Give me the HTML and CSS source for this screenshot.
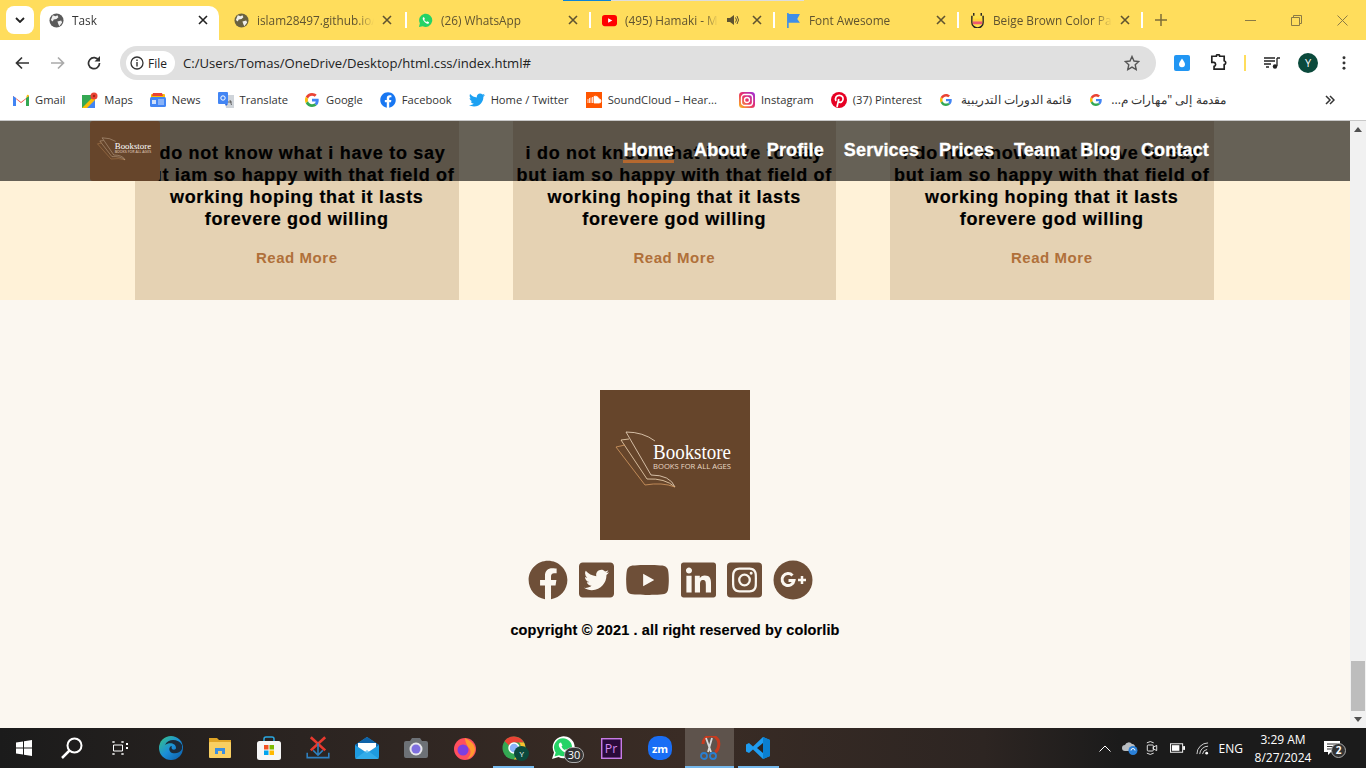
FILE: index.html
```html
<!DOCTYPE html>
<html lang="en">
<head>
    <meta charset="UTF-8">
    <title>Task</title>
    <link rel="stylesheet" href="styles.css">
</head>
<body>
    <svg class="sprite" aria-hidden="true">
        <symbol id="globe" viewBox="0 0 16 16">
            <circle cx="8" cy="8" r="7.5" fill="currentColor"/>
            <path d="M4 2.500l3 1 2-1 1 2-2 2-3 .5-1 2-2-1.500zM9 9l4-1 1 2-3 4-1-2z" fill="#fff" opacity=".9"/>
        </symbol>
        <symbol id="close" viewBox="0 0 10 10">
            <path d="M1 1l8 8M9 1l-8 8" stroke="currentColor" stroke-width="1.600" fill="none"/>
        </symbol>
        <symbol id="gicon" viewBox="0 0 48 48">
            <path fill="#EA4335" d="M24 9.500c3.540 0 6.710 1.220 9.210 3.600l6.850-6.850C35.900 2.380 30.470 0 24 0 14.620 0 6.510 5.380 2.560 13.220l7.980 6.190C12.430 13.720 17.740 9.500 24 9.500z"/>
            <path fill="#4285F4" d="M46.980 24.550c0-1.570-.15-3.090-.38-4.550H24v9.020h12.940c-.58 2.960-2.260 5.480-4.780 7.180l7.730 6c4.510-4.180 7.090-10.360 7.090-17.650z"/>
            <path fill="#FBBC05" d="M10.530 28.590c-.48-1.450-.76-2.990-.76-4.590s.27-3.140.76-4.590l-7.980-6.190C.92 16.460 0 20.120 0 24c0 3.880.92 7.540 2.560 10.780l7.970-6.190z"/>
            <path fill="#34A853" d="M24 48c6.480 0 11.930-2.130 15.890-5.810l-7.730-6c-2.150 1.450-4.920 2.300-8.160 2.300-6.260 0-11.570-4.220-13.470-9.910l-7.980 6.190C6.510 42.620 14.620 48 24 48z"/>
        </symbol>
        <symbol id="fb" viewBox="0 0 512 512">
            <path d="M504 256C504 119 393 8 256 8S8 119 8 256c0 123.780 90.690 226.380 209.250 245V327.690h-63V256h63v-54.640c0-62.150 37-96.480 93.670-96.480 27.140 0 55.520 4.840 55.520 4.840v61h-31.280c-30.800 0-40.410 19.120-40.410 38.730V256h68.780l-11 71.690h-57.780V501C413.310 482.380 504 379.780 504 256z"/>
        </symbol>
        <symbol id="booklogo" viewBox="0 0 150 150" preserveAspectRatio="none">
            <rect width="150" height="150" fill="#66452b"/>
            <g fill="none" stroke-width=".8">
                <path d="M26 42Q43 42 55 51M26 42L51 85Q70 85 75 97" stroke="#f0dcc4"/>
                <path d="M21 50L29 49M21 50L47 89Q65 88 75 97" stroke="#f3d9b8"/>
                <path d="M16 57L25 55M16 57L45 95Q62 92 75 97" stroke="#d59a62"/>
            </g>
            <text x="53" y="69" class="logo-name" textLength="78" lengthAdjust="spacingAndGlyphs">Bookstore</text>
            <text x="53" y="79" class="logo-tag" textLength="78" lengthAdjust="spacingAndGlyphs">BOOKS FOR ALL AGES</text>
        </symbol>
    </svg>

    <div class="load-bar"><span class="load-done"></span><span class="load-rest"></span></div>

    <header class="tabstrip">
        <div class="tab-search"><svg width="10" height="6" viewBox="0 0 10 6"><path d="M1 1l4 4 4-4" stroke="#222" stroke-width="1.800" fill="none"/></svg></div>
        <div class="tab tab-active">
            <svg class="fav fav-globe"><use href="#globe"/></svg>
            <span class="tab-title">Task</span>
            <svg class="tab-x"><use href="#close"/></svg>
        </div>
        <div class="tab tab-first">
            <svg class="fav fav-globe"><use href="#globe"/></svg>
            <span class="tab-title">islam28497.github.io/</span>
            <svg class="tab-x"><use href="#close"/></svg>
            <i class="tab-sep"></i>
        </div>
        <div class="tab">
            <svg class="fav" viewBox="0 0 16 16"><path d="M1 15l1-4A7 7 0 1 1 5 14z" fill="#25d366"/><path d="M5.500 4.500c-1 1-.5 3 1.500 5s3.800 2.300 4.500 1.300l.3-1-2-1-.8.800c-1-.4-2-1.400-2.400-2.400l.8-.8-1-2z" fill="#fff"/></svg>
            <span class="tab-title">(26) WhatsApp</span>
            <svg class="tab-x"><use href="#close"/></svg>
            <i class="tab-sep"></i>
        </div>
        <div class="tab">
            <svg class="fav" viewBox="0 0 16 12"><rect width="16" height="12" rx="3" fill="#f00"/><path d="M6.500 3.500v5L11 6z" fill="#fff"/></svg>
            <span class="tab-title tab-title-short">(495) Hamaki - Mawdoo</span>
            <svg class="tab-sound" viewBox="0 0 12 12"><path d="M0 4h3l4-3v10L3 8H0z" fill="#5f5330"/><path d="M8.500 3.500q2 2.500 0 5M10 2q3 4 0 8" stroke="#5f5330" fill="none"/></svg>
            <svg class="tab-x"><use href="#close"/></svg>
            <i class="tab-sep"></i>
        </div>
        <div class="tab">
            <svg class="fav" viewBox="0 0 14 14"><path d="M1 0v14h1.500V9H13l-2.500-3.500L13 1H2.500V0z" fill="#3f8ee8"/></svg>
            <span class="tab-title">Font Awesome</span>
            <svg class="tab-x"><use href="#close"/></svg>
            <i class="tab-sep"></i>
        </div>
        <div class="tab">
            <svg class="fav" viewBox="0 0 16 16"><path d="M2 3v7a6 6 0 0 0 12 0V3" fill="#ffe14a" stroke="#222" stroke-width="1.500"/><rect x="3" y="6" width="10" height="3" fill="#ffd23c"/><rect x="3" y="9" width="10" height="3" fill="#ef5a6f"/><path d="M4 0v3M12 0v3" stroke="#222" stroke-width="1.500"/></svg>
            <span class="tab-title">Beige Brown Color Palette</span>
            <svg class="tab-x"><use href="#close"/></svg>
            <i class="tab-sep"></i>
        </div>
        <svg class="tab-new" viewBox="0 0 12 12"><path d="M6 0v12M0 6h12" stroke="#7d6c38" stroke-width="1.500"/></svg>
        <div class="win-btns">
            <svg viewBox="0 0 11 11"><path d="M0 5.500h11" stroke="#8a7a45"/></svg>
            <svg viewBox="0 0 11 11"><path d="M.5 2.500h8v8h-8zM2.500 2.500v-2h8v8h-2" stroke="#8a7a45" fill="none"/></svg>
            <svg viewBox="0 0 11 11"><path d="M.5.500l10 10M10.500.500l-10 10" stroke="#8a7a45" fill="none"/></svg>
        </div>
    </header>

    <div class="toolbar">
        <svg class="tool" viewBox="0 0 14 14"><path d="M14 7H2M7 1.500L1.500 7 7 12.500" stroke="#333" stroke-width="1.700" fill="none"/></svg>
        <svg class="tool" viewBox="0 0 14 14"><path d="M0 7h12M7 1.500L12.500 7 7 12.500" stroke="#aaa" stroke-width="1.700" fill="none"/></svg>
        <svg class="tool" viewBox="0 0 14 14"><path d="M11.800 4.500A5.500 5.500 0 1 0 12.500 7" stroke="#333" stroke-width="1.700" fill="none"/><path d="M13 0v5.500H7.500z" fill="#333"/></svg>
        <div class="omnibox">
            <div class="site-chip">
                <svg width="14" height="14" viewBox="0 0 14 14"><circle cx="7" cy="7" r="6" stroke="#333" stroke-width="1.300" fill="none"/><path d="M7 6v4.500M7 3.500v1.500" stroke="#333" stroke-width="1.400"/></svg>
                <span>File</span>
            </div>
            <span class="url">C:/Users/Tomas/OneDrive/Desktop/html.css/index.html#</span>
            <svg class="star" viewBox="0 0 16 16"><path d="M8 1.500l2 4.500 4.800.5-3.600 3.200 1 4.800L8 12.100l-4.200 2.400 1-4.800L1.200 6.500 6 6z" stroke="#555" stroke-width="1.400" fill="none"/></svg>
        </div>
        <div class="tool-right">
            <svg class="ext-drop" viewBox="0 0 16 16"><rect width="16" height="16" rx="2" fill="#2196f3"/><path d="M8 3.500c2 3 3 4.300 3 5.800a3 3 0 0 1-6 0c0-1.500 1-2.800 3-5.800z" fill="#fff"/></svg>
            <svg class="ext-puzzle" viewBox="0 0 16 16"><path d="M1.500 2.500h4a1.500 1.500 0 0 1 3 0h4v4a1.800 1.800 0 0 1 0 3.500v4h-9v-2.500a1.800 1.800 0 0 0 0-3.500H1.500z" transform="translate(1 -.5)" stroke="#222" stroke-width="1.500" fill="none"/></svg>
            <i class="tool-div"></i>
            <svg class="ext-media" viewBox="0 0 16 12"><path d="M0 1h11M0 4h11M0 7h7M2 10h3" stroke="#222" stroke-width="1.300"/><path d="M13 1v8" stroke="#222" stroke-width="1.300"/><path d="M13 1h3" stroke="#222" stroke-width="1.500"/><circle cx="11" cy="9.500" r="2.200" fill="#222"/></svg>
            <span class="avatar">Y</span>
            <svg class="kebab" viewBox="0 0 4 16"><circle cx="2" cy="2" r="1.700"/><circle cx="2" cy="8" r="1.700"/><circle cx="2" cy="14" r="1.700"/></svg>
        </div>
    </div>

    <nav class="bookmarks">
        <a class="bm"><svg viewBox="0 0 16 12"><path d="M0 2l8 6 8-6v10h-3V5L8 9 3 5v7H0z" fill="#ea4335"/><path d="M0 2v10h3V4z" fill="#4285f4"/><path d="M16 2v10h-3V4z" fill="#34a853"/><path d="M13 4l3-2a1.500 1.500 0 0 0-2-1z" fill="#fbbc05"/></svg>Gmail</a>
        <a class="bm"><svg viewBox="0 0 16 16"><rect y="3" width="13" height="13" fill="#34a853"/><path d="M0 16L13 3v13z" fill="#fbbc05"/><path d="M5 16l8-8v8z" fill="#4285f4"/><circle cx="12" cy="4" r="3.500" fill="#ea4335"/><circle cx="12" cy="4" r="1.200" fill="#a52714"/></svg>Maps</a>
        <a class="bm"><svg viewBox="0 0 16 16"><rect x="1" y="2" width="14" height="4" rx="1" fill="#fbbc05"/><path d="M3 1h9l1 3H2z" fill="#ea4335"/><rect y="5" width="16" height="10" rx="1.500" fill="#4285f4"/><rect x="2" y="8" width="4" height="4" fill="#cfe0fb"/><path d="M8 8h6M8 10h6M8 12h6" stroke="#cfe0fb"/></svg>News</a>
        <a class="bm"><svg viewBox="0 0 16 16"><path d="M6 3h10v13H8z" fill="#cfd4da"/><rect width="10" height="12" rx="1" fill="#4285f4"/><path d="M8 14l2-2H7z" fill="#3367d6"/><circle cx="5" cy="6" r="2.200" stroke="#fff" fill="none"/><path d="M12 8l1.500 5M10 10h4" stroke="#666"/></svg>Translate</a>
        <a class="bm"><svg class="bm-google"><use href="#gicon"/></svg>Google</a>
        <a class="bm"><svg class="bm-fb"><use href="#fb"/></svg>Facebook</a>
        <a class="bm"><svg viewBox="0 0 512 512"><path fill="#1da1f2" d="M459 152c.3 4.500.3 9.100.3 13.600 0 138.700-105.600 298.600-298.600 298.600-59.500 0-114.700-17.200-161.100-47.100 8.400 1 16.600 1.300 25.300 1.300 49.100 0 94.200-16.600 130.300-44.800-46.100-1-84.800-31.200-98.100-72.800 6.500 1 13 1.600 19.800 1.600 9.400 0 18.800-1.300 27.600-3.600-48.100-9.700-84.100-52-84.100-103v-1.300c14 7.800 30.200 12.700 47.400 13.300-28.300-18.800-46.800-51-46.800-87.400 0-19.500 5.200-37.400 14.300-53 51.700 63.700 129.300 105.300 216.400 109.800-1.600-7.800-2.600-15.900-2.600-24 0-57.800 46.800-104.900 104.900-104.900 30.200 0 57.500 12.700 76.700 33.100 23.700-4.500 46.500-13.300 66.600-25.300-7.800 24.400-24.400 44.800-46.100 57.800 21.100-2.300 41.600-8.100 60.400-16.200-14.300 20.800-32.200 39.300-52.600 54.300z"/></svg>Home / Twitter</a>
        <a class="bm bm-wide"><svg viewBox="0 0 16 16"><rect width="16" height="16" fill="#f50"/><path d="M2 7v4M3.500 6v5M5 5.500V11M6.500 5v6M8 4.500V11h5a2 2 0 0 0 0-4c-.5-2-3-3.500-5-2.500z" stroke="#fff" fill="#fff" stroke-width=".8"/></svg>SoundCloud – Hear...</a>
        <a class="bm"><svg viewBox="0 0 16 16"><defs><linearGradient id="ig" x1="0" y1="1" x2="1" y2="0"><stop offset="0" stop-color="#fdc01c"/><stop offset=".5" stop-color="#e8306a"/><stop offset="1" stop-color="#9a2fe0"/></linearGradient></defs><rect width="16" height="16" rx="3.500" fill="url(#ig)"/><rect x="2.500" y="2.500" width="11" height="11" rx="3" stroke="#fff" stroke-width="1.300" fill="none"/><circle cx="8" cy="8" r="2.500" stroke="#fff" stroke-width="1.300" fill="none"/></svg>Instagram</a>
        <a class="bm"><svg viewBox="0 0 16 16"><circle cx="8" cy="8" r="8" fill="#e60023"/><path d="M6 15l1.800-8M5 9C3.500 6 5.500 3.300 8.300 3.300c2.700 0 4.200 2 3.700 4.400-.5 2.300-2.700 3.500-4.500 2" stroke="#fff" stroke-width="1.700" fill="none"/></svg>(37) Pinterest</a>
        <a class="bm bm-ar"><svg class="bm-g"><use href="#gicon"/></svg><span dir="rtl">قائمة الدورات التدريبية</span></a>
        <a class="bm bm-ar"><svg class="bm-g"><use href="#gicon"/></svg><span dir="rtl">مقدمة إلى "مهارات م...</span></a>
        <svg class="bm-more" viewBox="0 0 10 10"><path d="M1 1l4 4-4 4M5 1l4 4-4 4" stroke="#333" stroke-width="1.500" fill="none"/></svg>
    </nav>

    <div class="viewport">
        <main class="page">
            <div class="site-nav">
                <svg class="site-logo"><use href="#booklogo"/></svg>
                <ul class="site-links">
                    <li class="current">Home</li>
                    <li>About</li>
                    <li>Profile</li>
                    <li>Services</li>
                    <li>Prices</li>
                    <li>Team</li>
                    <li>Blog</li>
                    <li>Contact</li>
                </ul>
            </div>

            <section class="cards">
                <article class="card">
                    <p>i do not know what i have to say<br>but iam so happy with that field of<br>working hoping that it lasts<br>forevere god willing</p>
                    <a class="more">Read More</a>
                </article>
                <article class="card">
                    <p>i do not know what i have to say<br>but iam so happy with that field of<br>working hoping that it lasts<br>forevere god willing</p>
                    <a class="more">Read More</a>
                </article>
                <article class="card">
                    <p>i do not know what i have to say<br>but iam so happy with that field of<br>working hoping that it lasts<br>forevere god willing</p>
                    <a class="more">Read More</a>
                </article>
            </section>

            <footer class="footer">
                <svg class="footer-logo"><use href="#booklogo"/></svg>
                <div class="social">
                    <svg class="s-round" viewBox="0 0 512 512"><use href="#fb"/></svg>
                    <svg class="s-square" viewBox="0 0 448 512"><path d="M400 32H48C21.500 32 0 53.500 0 80v352c0 26.500 21.500 48 48 48h352c26.500 0 48-21.500 48-48V80c0-26.500-21.500-48-48-48zm-48.900 158.800c.2 2.800.2 5.700.2 8.500 0 86.700-66 186.600-186.600 186.600-37.200 0-71.700-10.800-100.700-29.400 5.300.6 10.400.8 15.800.8 30.700 0 58.900-10.400 81.400-28-28.800-.6-53-19.500-61.300-45.500 10.100 1.500 19.200 1.500 29.600-1.200-30-6.100-52.500-32.500-52.500-64.400v-.8c8.700 4.900 18.900 7.900 29.600 8.300a65.447 65.447 0 0 1-29.200-54.600c0-12.200 3.200-23.400 8.900-33.100 32.300 39.800 80.800 65.800 135.200 68.600-9.300-44.500 24-80.600 64-80.600 18.900 0 35.900 7.900 47.900 20.700 14.800-2.800 29-8.300 41.600-15.800-4.900 15.200-15.100 28-28.600 36 13.100-1.400 25.800-5.100 37.600-10.200-8.900 13.100-20.100 24.700-32.900 34z"/></svg>
                    <svg class="s-wide" viewBox="0 0 576 512"><path d="M549.655 124.083c-6.281-23.650-24.787-42.276-48.284-48.597C458.781 64 288 64 288 64S117.220 64 74.629 75.486c-23.497 6.322-42.003 24.947-48.284 48.597-11.412 42.867-11.412 132.305-11.412 132.305s0 89.438 11.412 132.305c6.281 23.650 24.787 41.500 48.284 47.821C117.220 448 288 448 288 448s170.780 0 213.371-11.486c23.497-6.321 42.003-24.171 48.284-47.821 11.412-42.867 11.412-132.305 11.412-132.305s0-89.438-11.412-132.305zm-317.510 213.508V175.185l142.739 81.205-142.739 81.201z"/></svg>
                    <svg class="s-square" viewBox="0 0 448 512"><path d="M416 32H31.900C14.300 32 0 46.500 0 64.300v383.400C0 465.500 14.300 480 31.900 480H416c17.600 0 32-14.500 32-32.300V64.300c0-17.800-14.400-32.300-32-32.300zM135.400 416H69V202.200h66.500V416zm-33.200-243c-21.300 0-38.500-17.300-38.500-38.500S80.900 96 102.200 96c21.200 0 38.500 17.300 38.500 38.500 0 21.300-17.200 38.500-38.500 38.500zm282.100 243h-66.400V312c0-24.800-.5-56.700-34.500-56.700-34.600 0-39.900 27-39.900 54.900V416h-66.400V202.200h63.700v29.200h.9c8.900-16.800 30.600-34.500 62.900-34.500 67.200 0 79.700 44.300 79.700 101.900V416z"/></svg>
                    <svg class="s-square" viewBox="0 0 448 512"><path d="M224 202.660A53.340 53.340 0 1 0 277.360 256 53.380 53.380 0 0 0 224 202.660zm124.710-41a54 54 0 0 0-30.410-30.410c-21-8.290-71-6.430-94.300-6.430s-73.250-1.930-94.310 6.430a54 54 0 0 0-30.410 30.410c-8.280 21-6.430 71.050-6.430 94.330S91 329.260 99.320 350.330a54 54 0 0 0 30.410 30.410c21 8.290 71 6.430 94.310 6.430s73.240 1.930 94.300-6.430a54 54 0 0 0 30.410-30.410c8.350-21 6.430-71.050 6.430-94.330s1.920-73.260-6.430-94.330zM224 338a82 82 0 1 1 82-82 81.900 81.900 0 0 1-82 82zm85.380-148.300a19.140 19.140 0 1 1 19.130-19.140 19.100 19.100 0 0 1-19.090 19.140zM400 32H48A48 48 0 0 0 0 80v352a48 48 0 0 0 48 48h352a48 48 0 0 0 48-48V80a48 48 0 0 0-48-48zm-17.120 290c-1.290 25.630-7.140 48.340-25.850 67s-41.400 24.630-67 25.850c-26.410 1.490-105.590 1.490-132 0-25.630-1.290-48.260-7.150-67-25.850s-24.630-41.420-25.850-67c-1.490-26.420-1.490-105.610 0-132 1.290-25.630 7.070-48.340 25.850-67s41.470-24.560 67-25.780c26.410-1.490 105.590-1.490 132 0 25.630 1.290 48.330 7.150 67 25.850s24.630 41.420 25.850 67.050c1.490 26.320 1.490 105.440 0 131.880z"/></svg>
                    <svg class="s-round" viewBox="0 0 40 40"><circle cx="20" cy="20" r="19.500"/><path d="M19.500 15.500a6 6 0 1 0 1.500 5h-5.500" class="gplus"/><path d="M25 20h8M29 16v8" class="gplus-add"/></svg>
                </div>
                <p class="copyright">copyright © 2021 . all right reserved by colorlib</p>
            </footer>
        </main>
        <aside class="scrollbar">
            <svg viewBox="0 0 8 5"><path d="M4 0l4 5H0z"/></svg>
            <div class="scroll-track"><div class="scroll-thumb"></div></div>
            <svg viewBox="0 0 8 5"><path d="M0 0h8L4 5z"/></svg>
        </aside>
    </div>

    <footer class="taskbar">
        <div class="task-start">
            <svg class="t-win" viewBox="0 0 16 16"><path d="M0 2.500l7-1v6H0zM8 1.300l8-1.300v7.500H8zM0 8.500h7v6l-7-1zM8 8.500h8V16l-8-1.300z" fill="#fff"/></svg>
            <svg class="t-search" viewBox="0 0 22 22"><circle cx="13.500" cy="8.500" r="7" stroke="#fff" stroke-width="2" fill="none"/><path d="M8.500 13.500L1 21" stroke="#fff" stroke-width="2.500"/></svg>
            <svg class="t-view" viewBox="0 0 16 16"><path d="M1.500 5h9v6h-9zM1 2h2M9 2h2M1 14h2M9 14h2M1 1v2M11 1v2M1 13v2M11 13v2" stroke="#fff" fill="none"/><path d="M14 3h2v2h-2zM14 7h2v2h-2z" fill="#fff"/></svg>
        </div>
        <div class="task-apps">
            <span class="app"><svg viewBox="0 0 24 24"><defs><linearGradient id="edge" x1="0" y1="0" x2="1" y2="1"><stop offset="0" stop-color="#39c481"/><stop offset=".5" stop-color="#1b8fd8"/><stop offset="1" stop-color="#0c59a4"/></linearGradient></defs><circle cx="12" cy="12" r="12" fill="url(#edge)"/><path d="M23 9C20 3 9 2 6 9c4-3 11-2 11 3 0 2-3 2-4 1-1-2 0-3 0-3-3 0-4 5 0 7 4 1 8 0 10-4z" fill="#1c2a38"/></svg></span>
            <span class="app"><svg viewBox="0 0 24 20"><path d="M1 0h8l2 2h12v5H1z" fill="#e0a526"/><rect x="1" y="4" width="22" height="16" rx="1" fill="#f8cf62"/><path d="M7 10h10v6h-3v-3h-4v3H7z" fill="#3a8ee0"/></svg></span>
            <span class="app"><svg viewBox="0 0 24 24"><path d="M7 6V3a2 2 0 0 1 2-2h6a2 2 0 0 1 2 2v3" stroke="#2aa8e0" stroke-width="1.500" fill="none"/><rect y="5" width="24" height="19" rx="2.500" fill="#f6f6f6"/><rect x="7" y="9" width="4.500" height="4.500" fill="#f25022"/><rect x="12.500" y="9" width="4.500" height="4.500" fill="#7fba00"/><rect x="7" y="14.500" width="4.500" height="4.500" fill="#00a4ef"/><rect x="12.500" y="14.500" width="4.500" height="4.500" fill="#ffb900"/></svg></span>
            <span class="app"><svg viewBox="0 0 20 20"><path d="M4 1l12 11M16 1L4 12" stroke="#e8392e" stroke-width="2.200"/><path d="M10 6v10M6 12l4 4 4-4" stroke="#2f80c0" stroke-width="1.300" fill="none"/><path d="M1 14v4h18v-4" stroke="#2f80c0" stroke-width="1.300" fill="none"/></svg></span>
            <span class="app"><svg viewBox="0 0 24 22"><path d="M12 0l12 8v12a2 2 0 0 1-2 2H2a2 2 0 0 1-2-2V8z" fill="#1e9be0"/><path d="M0 8l12 8 12-8L12 0z" fill="#0f63a8"/><path d="M3 6h18v4l-9 6-9-6z" fill="#fff"/><path d="M0 22l12-9 12 9z" fill="#3bb3ee" opacity=".7"/></svg></span>
            <span class="app"><svg viewBox="0 0 24 20"><path d="M8 0h8l2 3h4a2 2 0 0 1 2 2v13a2 2 0 0 1-2 2H2a2 2 0 0 1-2-2V5a2 2 0 0 1 2-2h4z" fill="#6d7176"/><circle cx="12" cy="11" r="6.500" fill="#e6e6ea"/><circle cx="12" cy="11" r="4.500" fill="#7f6fe0"/></svg></span>
            <span class="app"><svg viewBox="0 0 24 24"><circle cx="12" cy="13" r="11" fill="#ff4f5e"/><circle cx="10" cy="14" r="5.500" fill="#7d3fe0"/><path d="M12 2c3 2 9 4 10 11 0 4-3 9-8 10 4-3 5-9 1-12-1-2-3-5-3-9z" fill="#ff9a2e"/></svg></span>
            <span class="app app-open"><svg viewBox="0 0 24 24"><circle cx="12" cy="12" r="11.500" fill="#34a853"/><path d="M12 .5a11.500 11.500 0 0 1 10 6H12a5.500 5.500 0 0 0-5 3L2.500 5A11.500 11.500 0 0 1 12 .5z" fill="#ea4335"/><path d="M22 6.500a11.500 11.500 0 0 1-10 17l5-9a5.500 5.500 0 0 0 0-8z" fill="#fbc02d"/><circle cx="12" cy="12" r="5" fill="#8ab4f8" stroke="#fff" stroke-width="1.500"/></svg><b class="app-avatar">Y</b></span>
            <span class="app"><svg viewBox="0 0 24 24"><path d="M1 23l2-6.500A11 11 0 1 1 7.500 21z" fill="#fff"/><path d="M3.500 20.500l1.200-4A9 9 0 1 1 8 19.300z" fill="#25d366"/><path d="M8.500 7c-1.500 1.500-.5 4.500 2 7s5.500 3.500 7 2l.5-1.500-3-1.500-1 1c-1.500-.5-3-2-3.500-3.500l1-1-1.500-3z" fill="#fff"/></svg><b class="app-count">30</b></span>
            <span class="app"><svg class="app-pr" viewBox="0 0 22 22"><rect x=".75" y=".75" width="20.500" height="20.500" fill="#2a0a3a" stroke="#c77be6" stroke-width="1.500"/><text x="4" y="16" class="pr-text">Pr</text></svg></span>
            <span class="app"><svg viewBox="0 0 24 24"><rect width="24" height="24" rx="10" fill="#1a6ef5"/><text x="12" y="16.500" class="zm-text">zm</text></svg></span>
            <span class="app app-active"><svg viewBox="0 0 20 24"><path d="M4 8a8 8 0 0 1 15-4c2 4 0 11-3 12" stroke="#c83a1e" stroke-width="3" fill="none"/><path d="M7 2l5 14M13 2L9 16" stroke="#d8d8d8" stroke-width="1.800"/><circle cx="5" cy="20" r="3" stroke="#2a7fd0" stroke-width="1.800" fill="none"/><circle cx="14" cy="20" r="3" stroke="#2a7fd0" stroke-width="1.800" fill="none"/></svg></span>
            <span class="app app-open"><svg viewBox="0 0 24 24"><path d="M17 1l7 3v16l-7 3L7 13.500 3 17l-3-1.500v-7L3 7l4 3.500z" fill="#1f9cf0"/><path d="M17 7l-6 5 6 5z" fill="#2a2320"/><path d="M17 1l7 3v16l-7 3z" fill="#0a7fd0"/></svg></span>
        </div>
        <div class="tray">
            <svg class="tr-chev" viewBox="0 0 12 7"><path d="M.5 6.500L6 1l5.500 5.500" stroke="#fff" fill="none"/></svg>
            <svg class="tr-cloud" viewBox="0 0 16 14"><path d="M3 10a3 3 0 0 1 0-6 4 4 0 0 1 7-1 3 3 0 0 1 3 4H8v3z" fill="#b8bcc0"/><circle cx="11" cy="9.500" r="4.500" fill="#2a80d8"/><path d="M9 9.500a2 2 0 0 1 4 0" stroke="#fff" fill="none"/></svg>
            <svg class="tr-meet" viewBox="0 0 14 18"><rect x="1.500" y="5.500" width="7" height="7" rx="1" stroke="#fff" fill="none"/><path d="M8.500 8l4-2v6l-4-2zM1 3q4-3 8 0M1 15q4 3 8 0" stroke="#fff" fill="none"/></svg>
            <svg class="tr-batt" viewBox="0 0 16 10"><rect x=".5" y=".5" width="13" height="9" stroke="#fff" fill="none"/><rect x="2" y="2" width="8" height="6" fill="#fff"/><rect x="14" y="3" width="2" height="4" fill="#fff"/></svg>
            <svg class="tr-wifi" viewBox="0 0 14 14"><path d="M1 13A12 12 0 0 1 13 1M4 13A9 9 0 0 1 13 4.500M7 13a6 6 0 0 1 5-5" stroke="#ddd" fill="none"/><circle cx="11.500" cy="12" r="1.500" fill="#fff"/></svg>
            <span class="tr-lang">ENG</span>
            <div class="tr-clock"><span>3:29 AM</span><span>8/27/2024</span></div>
            <div class="tr-note">
                <svg viewBox="0 0 16 14"><path d="M0 0h16v11H7l-3 3v-3H0z" fill="#fff"/><path d="M3 3h10M3 5.500h10M3 8h6" stroke="#333"/></svg>
                <b>2</b>
            </div>
        </div>
    </footer>
</body>
</html>
```

FILE: styles.css
```css
* {
    box-sizing: border-box;
}
html, body {
    margin: 0;
    height: 768px;
    overflow: hidden;
}
body {
    position: relative;
    display: flex;
    flex-direction: column;
    width: 1366px;
    font-family: "Open Sans", "Noto Sans", sans-serif;
    font-size: 12px;
    color: #333;
    background: #fff;
}
svg {
    display: block;
    flex: none;
}
.sprite {
    position: absolute;
    width: 0;
    height: 0;
}
.logo-name {
    font-family: "Liberation Serif", serif;
    font-size: 21px;
    font-weight: normal;
    fill: #fff;
}
.logo-tag {
    font-family: "Open Sans", sans-serif;
    font-size: 7.200px;
    font-weight: normal;
    fill: #e8d8c4;
}

/* tabs */
.load-bar {
    position: absolute;
    top: 0;
    left: 563px;
    display: flex;
    height: 1px;
}
.load-done {
    width: 48px;
    background: #0a84d8;
}
.load-rest {
    width: 193px;
    background: #ddd;
}
.tabstrip {
    display: flex;
    align-items: center;
    height: 40px;
    padding-left: 6px;
    background: #ffdd5c;
}
.tab-search {
    display: flex;
    align-items: center;
    justify-content: center;
    width: 28px;
    height: 28px;
    margin-right: 6px;
    border-radius: 8px;
    background: #fff;
}
.tab {
    display: flex;
    align-items: center;
    width: 184px;
    height: 40px;
    padding-left: 11px;
    color: #5f5330;
    font-size: 11.800px;
}
.tab-active {
    position: relative;
    width: 179px;
    margin-right: 4px;
    padding-left: 9px;
    color: #333;
}
.tab-active::before {
    content: "";
    position: absolute;
    z-index: 0;
    top: 6px;
    left: 0;
    right: 0;
    bottom: 0;
    border-radius: 10px 10px 0 0;
    background: #fff;
}
.tab-active > * {
    position: relative;
}
.fav {
    width: 15px;
    height: 15px;
    margin-right: 8px;
}
.fav-globe {
    color: #6a6240;
}
.tab-active .fav-globe {
    color: #5a5a5a;
}
.tab-title {
    flex: 1;
    min-width: 0;
    overflow: hidden;
    white-space: nowrap;
    -webkit-mask-image: linear-gradient(to right, #000 85%, transparent);
    mask-image: linear-gradient(to right, #000 85%, transparent);
}
.tab-title-short {
    flex: none;
    width: 93px;
}
.tab-sound {
    width: 12px;
    height: 12px;
    margin: 0 5px 0 9px;
}
.tab-x {
    width: 10px;
    height: 10px;
    margin: 0 11px 0 8px;
    color: #5f5330;
}
.tab-first .tab-x {
    margin-right: 13px;
}
.tab-active .tab-x {
    color: #222;
}
.tab-sep {
    width: 2px;
    height: 16px;
    background: #fff;
}
.tab-new {
    width: 12px;
    height: 12px;
    margin-left: 12px;
}
.win-btns {
    display: flex;
    gap: 35px;
    margin-left: auto;
    padding-right: 18px;
}
.win-btns svg {
    width: 11px;
    height: 11px;
}

/* toolbar */
.toolbar {
    display: flex;
    align-items: center;
    height: 43px;
    padding: 3px 0 0 15px;
    border-radius: 8px 8px 0 0;
    background: #fff;
}
.tool {
    width: 14px;
    height: 14px;
    margin-right: 22px;
}
.omnibox {
    display: flex;
    align-items: center;
    width: 1036px;
    height: 34px;
    margin-left: -3px;
    padding: 0 16px 0 6px;
    border-radius: 17px;
    background: #e0e0e0;
    color: #222;
}
.site-chip {
    display: flex;
    align-items: center;
    gap: 4px;
    height: 24px;
    padding: 0 8px 0 4px;
    border-radius: 12px;
    background: #fff;
    font-size: 12px;
}
.url {
    margin-left: 8px;
    font-size: 13.100px;
}
.star {
    width: 16px;
    height: 16px;
    margin-left: auto;
}
.tool-right {
    display: flex;
    align-items: center;
    flex: 1;
}
.ext-drop {
    width: 16px;
    height: 16px;
    margin-left: 18px;
}
.ext-puzzle {
    width: 18px;
    height: 18px;
    margin-left: 19px;
}
.tool-div {
    width: 2px;
    height: 16px;
    margin-left: 17px;
    background: #ffdd5c;
}
.ext-media {
    width: 16px;
    height: 12px;
    margin-left: 18px;
}
.avatar {
    width: 20px;
    height: 20px;
    margin-left: 18px;
    border-radius: 50%;
    background: #0b4a3c;
    color: #fff;
    font-size: 11px;
    line-height: 20px;
    text-align: center;
}
.kebab {
    width: 4px;
    height: 14px;
    margin-left: 24px;
    fill: #333;
}

/* bookmarks */
.bookmarks {
    display: flex;
    align-items: center;
    gap: 17px;
    height: 38px;
    padding: 0 0 4px 13px;
    border-bottom: 1px solid #c8c8c8;
    font-size: 11.200px;
    white-space: nowrap;
}
.bm {
    display: flex;
    align-items: center;
    gap: 6px;
}
.bm svg {
    width: 16px;
    height: 16px;
}
.bm .bm-google {
    width: 14px;
    height: 14px;
    margin-right: 1px;
}
.bm .bm-g {
    width: 12px;
    height: 12px;
}
.bm-fb {
    fill: #1877f2;
}
.bm-wide {
    margin-right: 5px;
}
.bm-ar {
    gap: 9px;
    margin-left: 1px;
    font-size: 12.400px;
}
.bm-more {
    width: 10px;
    height: 10px;
    margin-left: auto;
    margin-right: 31px;
}

/* page */
.viewport {
    display: flex;
    height: 607px;
}
.page {
    position: relative;
    display: flex;
    flex-direction: column;
    width: 1350px;
    font-family: "Liberation Sans", Arial, sans-serif;
    font-weight: bold;
}
.site-nav {
    position: absolute;
    top: 0;
    left: 0;
    display: flex;
    align-items: center;
    width: 100%;
    height: 60px;
    padding: 0 141px 0 90px;
    background: rgba(0, 0, 0, .6);
}
.site-logo {
    width: 70px;
    height: 60px;
    border-radius: 3px;
}
.site-links {
    display: flex;
    gap: 20px;
    margin: 0 0 2px auto;
    padding: 0;
    list-style: none;
    color: #fff;
    font-size: 18px;
    letter-spacing: .15px;
    -webkit-text-stroke: .3px #fff;
}
.site-links li {
    position: relative;
}
.current::after {
    content: "";
    position: absolute;
    left: 0;
    right: 0;
    bottom: -2px;
    height: 3px;
    background: #b5682f;
}
.cards {
    display: flex;
    gap: 54px;
    height: 179px;
    padding-left: 135px;
    background: #fff2d8;
}
.card {
    display: flex;
    flex-direction: column;
    align-items: center;
    justify-content: flex-end;
    width: 323.500px;
    padding-bottom: 33px;
    background: #e5d2b3;
}
.card p {
    margin: 0 0 19px;
    color: #000;
    font-size: 18px;
    line-height: 22px;
    letter-spacing: .7px;
    text-align: center;
    white-space: nowrap;
    -webkit-text-stroke: .2px #000;
}
.more {
    color: #b0703a;
    font-size: 15px;
    line-height: 18px;
    letter-spacing: .55px;
}
.footer {
    display: flex;
    flex: 1;
    flex-direction: column;
    align-items: center;
    padding-top: 90px;
    background: #fbf7f0;
}
.footer-logo {
    width: 150px;
    height: 150px;
}
.social {
    display: flex;
    align-items: center;
    gap: 11px;
    height: 40px;
    margin: 20px 9px 0 0;
    fill: #6e4f38;
}
.s-round {
    width: 40px;
    height: 40px;
}
.s-square {
    width: 35px;
    height: 40px;
}
.s-wide {
    width: 45px;
    height: 40px;
}
.gplus {
    fill: none;
    stroke: #fbf7f0;
    stroke-width: 3;
}
.gplus-add {
    fill: none;
    stroke: #fbf7f0;
    stroke-width: 2.500;
}
.copyright {
    margin: 21px 0 0;
    color: #000;
    font-size: 14.500px;
    line-height: 18px;
    letter-spacing: .12px;
    -webkit-text-stroke: .15px #000;
}

/* scrollbar */
.scrollbar {
    display: flex;
    flex-direction: column;
    align-items: center;
    width: 16px;
    padding: 6px 0;
    background: #f1f1f1;
    fill: #505050;
}
.scrollbar svg {
    width: 8px;
    height: 5px;
}
.scroll-track {
    display: flex;
    flex: 1;
    align-items: flex-end;
    width: 100%;
    padding: 0 1px 6px;
}
.scroll-thumb {
    width: 100%;
    height: 50px;
    background: #bdbdbd;
}

/* taskbar */
.taskbar {
    display: flex;
    align-items: center;
    height: 40px;
    background: linear-gradient(to right, #1b1b1b 0, #2b2421 22%, #3a2c25 50%, #2d2522 72%, #1b1b1b 82%);
    color: #fff;
}
.task-start {
    display: flex;
    align-items: center;
    width: 147px;
    padding-left: 16px;
}
.t-win {
    width: 16px;
    height: 16px;
}
.t-search {
    width: 22px;
    height: 22px;
    margin-left: 29px;
}
.t-view {
    width: 16px;
    height: 16px;
    margin-left: 29px;
}
.task-apps {
    display: flex;
    height: 40px;
}
.app {
    position: relative;
    display: flex;
    align-items: center;
    justify-content: center;
    width: 48.900px;
    height: 40px;
}
.app svg {
    width: 24px;
    height: 24px;
}
.app .app-pr {
    width: 21px;
    height: 21px;
}
.app-open::after {
    content: "";
    position: absolute;
    left: 4px;
    right: 4px;
    bottom: 0;
    height: 2px;
    background: #76b9ed;
}
.app-active {
    background: #5e534c;
}
.app-active::after {
    content: "";
    position: absolute;
    left: 0;
    right: 0;
    bottom: 0;
    height: 2px;
    background: #76b9ed;
}
.app-avatar {
    position: absolute;
    right: 9px;
    bottom: 7px;
    width: 15px;
    height: 15px;
    border-radius: 50%;
    background: #0b4a3c;
    font-size: 8px;
    font-weight: normal;
    line-height: 15px;
    text-align: center;
}
.app-count {
    position: absolute;
    right: 3px;
    bottom: 5px;
    width: 20px;
    height: 16px;
    border: 1px solid #aaa;
    border-radius: 8px;
    background: #333;
    font-size: 11px;
    font-weight: normal;
    line-height: 14px;
    text-align: center;
}
.pr-text {
    fill: #d58af0;
    font-size: 13px;
    font-family: "Open Sans", sans-serif;
}
.zm-text {
    fill: #fff;
    font-size: 11px;
    font-weight: bold;
    text-anchor: middle;
    font-family: "Open Sans", sans-serif;
}
.tray {
    display: flex;
    align-items: center;
    margin-left: auto;
    padding-right: 24px;
    font-size: 12px;
}
.tr-chev {
    width: 12px;
    height: 7px;
}
.tr-cloud {
    width: 16px;
    height: 14px;
    margin-left: 11px;
}
.tr-meet {
    width: 12px;
    height: 16px;
    margin-left: 8px;
}
.tr-batt {
    width: 15px;
    height: 10px;
    margin-left: 12px;
}
.tr-wifi {
    width: 13px;
    height: 13px;
    margin-left: 11px;
}
.tr-lang {
    margin-left: 10px;
}
.tr-clock {
    display: flex;
    flex-direction: column;
    align-items: center;
    width: 70px;
    margin-left: 5px;
    padding-top: 1px;
    line-height: 18px;
}
.tr-note {
    position: relative;
    width: 18px;
    margin-left: 6px;
}
.tr-note svg {
    width: 16px;
    height: 14px;
}
.tr-note b {
    position: absolute;
    top: 2px;
    left: 7px;
    width: 15px;
    height: 15px;
    border: 1px solid #aaa;
    border-radius: 50%;
    background: #333;
    font-size: 10px;
    line-height: 13px;
    text-align: center;
}
```
